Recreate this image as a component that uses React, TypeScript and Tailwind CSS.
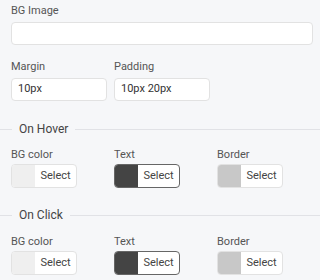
function Label({ children, tight }: { children: React.ReactNode; tight?: boolean }) {
  return (
    <div className={`text-[11px] leading-[14px] text-[#555] ${tight ? "mb-[2px]" : "mb-[4px]"}`}>{children}</div>
  );
}

function ColorPick({ label, swatch, dark }: { label: string; swatch: string; dark?: boolean }) {
  return (
    <div className="w-[103px] shrink-0">
      <Label tight>{label}</Label>
      <div
        className={`flex h-[24px] w-[66px] rounded-[4px] overflow-hidden border bg-white ${
          dark ? "border-[#666]" : "border-[#e2e2e2]"
        }`}
      >
        <div className="w-[23px] h-full" style={{ backgroundColor: swatch }} />
        <div className="flex-1 flex items-center justify-center text-[11px] text-[#444]">Select</div>
      </div>
    </div>
  );
}

function Section({ title }: { title: string }) {
  return (
    <div className="flex items-center h-[16px]">
      <div className="w-[12px] h-px bg-[#e1e2e6]" />
      <div className="px-[7px] text-[12px] text-[#444]">{title}</div>
      <div className="flex-1 h-px bg-[#e1e2e6]" />
    </div>
  );
}

function ColorRow() {
  return (
    <div className="flex px-[11px]">
      <ColorPick label="BG color" swatch="#efefef" />
      <ColorPick label="Text" swatch="#444444" dark />
      <ColorPick label="Border" swatch="#c8c8c8" />
    </div>
  );
}

export default function App() {
  return (
    <div
      className="w-[320px] h-[280px] bg-[#f6f7f9] overflow-hidden"
      style={{ fontFamily: "Roboto, 'Noto Sans', sans-serif" }}
    >
      <div className="px-[11px] pt-[4px]">
        <Label>BG Image</Label>
        <div className="h-[23px] w-[302px] rounded-[4px] border border-[#e2e2e2] bg-white" />
        <div className="flex gap-[7px] mt-[15px]">
          <div>
            <Label>Margin</Label>
            <div className="h-[23px] w-[96px] rounded-[4px] border border-[#e2e2e2] bg-white text-[11px] text-[#333] flex items-center px-[6px]">
              10px
            </div>
          </div>
          <div>
            <Label>Padding</Label>
            <div className="h-[23px] w-[96px] rounded-[4px] border border-[#e2e2e2] bg-white text-[11px] text-[#333] flex items-center px-[6px]">
              10px 20px
            </div>
          </div>
        </div>
      </div>
      <div className="mt-[20px]">
        <Section title="On Hover" />
      </div>
      <div className="mt-[11px]">
        <ColorRow />
      </div>
      <div className="mt-[19px]">
        <Section title="On Click" />
      </div>
      <div className="mt-[12px]">
        <ColorRow />
      </div>
    </div>
  );
}
